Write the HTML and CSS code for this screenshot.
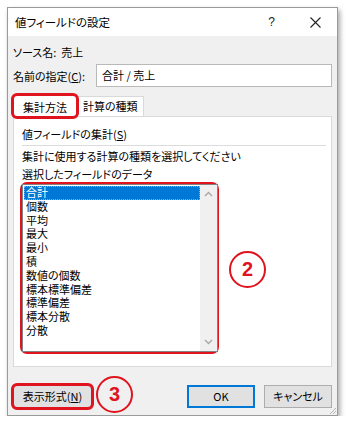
FILE: index.html
```html
<!DOCTYPE html>
<html>

<head>
  <title>値フィールドの設定</title>
  <meta charset="utf-8">
  <link rel="stylesheet" href="styles.css">
</head>

<body>

  <div class="dialog">
    <div class="titlebar">
      <span class="title">値フィールドの設定</span>
      <span class="help">?</span>
      <svg class="close" width="11" height="11" viewBox="0 0 11 11">
        <path d="M0.5 0.5 L10.5 10.5 M10.5 0.5 L0.5 10.5" stroke="#222" stroke-width="1.1" fill="none" />
      </svg>
    </div>

    <div class="content">
      <div class="source-row">ソース名:&nbsp;&nbsp;売上</div>

      <div class="name-row">
        <label>名前の指定(<u>C</u>):</label>
        <div class="input">合計 / 売上</div>
      </div>

      <div class="tabs">
        <div class="tab tab-active mark">集計方法</div>
        <div class="tab">計算の種類</div>
      </div>

      <div class="panel">
        <div class="group-title">値フィールドの集計(<u>S</u>)</div>
        <div class="separator"></div>
        <div class="text-line">集計に使用する計算の種類を選択してください</div>
        <div class="text-line">選択したフィールドのデータ</div>

        <div class="list-mark">
          <div class="listbox">
            <ul class="items">
              <li class="selected">合計</li>
              <li>個数</li>
              <li>平均</li>
              <li>最大</li>
              <li>最小</li>
              <li>積</li>
              <li>数値の個数</li>
              <li>標本標準偏差</li>
              <li>標準偏差</li>
              <li>標本分散</li>
              <li>分散</li>
            </ul>
            <div class="scrollbar">
              <svg width="9" height="6" viewBox="0 0 9 6">
                <path d="M1 5 L4.5 1.5 L8 5" stroke="#a6a6a6" stroke-width="1.3" fill="none" />
              </svg>
              <svg width="9" height="6" viewBox="0 0 9 6">
                <path d="M1 1 L4.5 4.5 L8 1" stroke="#a6a6a6" stroke-width="1.3" fill="none" />
              </svg>
            </div>
          </div>
        </div>
      </div>

      <div class="buttons">
        <div class="button mark">表示形式(<u>N</u>)</div>
        <div class="spacer"></div>
        <div class="button button-default">OK</div>
        <div class="button">キャンセル</div>
      </div>
    </div>

    <div class="badge badge-2">2</div>
    <div class="badge badge-3">3</div>

    <svg class="grip" width="10" height="10" viewBox="0 0 10 10">
      <path d="M9 3 L3 9 M9 6 L6 9" stroke="#b5b5b5" stroke-width="1" fill="none" />
    </svg>
  </div>

</body>

</html>
```

FILE: styles.css
```css
html {
  background-color: #ffffff;
}

body {
  margin: 0;
  padding: 7px 0 0 7px;
  font-family: "Noto Sans CJK JP", "Noto Sans", sans-serif;
  font-feature-settings: "palt";
  font-size: 11px;
  color: #000000;
}

.dialog {
  position: relative;
  width: 329px;
  height: 407px;
  border: 1px solid #9a9a9a;
  box-shadow: 2px 3px 5px rgba(0, 0, 0, 0.35);
  background-color: #f0f0f0;
  display: flex;
  flex-direction: column;
}

.titlebar {
  height: 28px;
  background-color: #ffffff;
  display: flex;
  align-items: center;
  padding-left: 7px;
}

.title {
  font-size: 11.5px;
  flex: 1;
}

.help {
  font-size: 12px;
  font-family: "Liberation Sans", sans-serif;
  color: #222;
  margin-right: 35px;
}

.close {
  margin-right: 16px;
}

.content {
  padding: 0 5px;
  display: flex;
  flex-direction: column;
}

.source-row {
  padding-top: 8px;
  line-height: 16px;
  height: 16px;
}

.name-row {
  margin-top: 4px;
  display: flex;
  align-items: center;
  height: 23px;
}

.name-row label {
  width: 83px;
}

.input {
  flex: 1;
  height: 21px;
  line-height: 21px;
  padding-left: 5px;
  background-color: #ffffff;
  border: 1px solid #b9b9b9;
}

.tabs {
  margin-top: 7px;
  height: 22px;
  display: flex;
  align-items: flex-end;
}

.tab {
  height: 19px;
  line-height: 19px;
  padding: 0 5px;
  border: 1px solid #d9d9d9;
  border-bottom: none;
  background-color: #ffffff;
}

.tab-active {
  height: 21px;
  width: 52px;
  text-align: center;
  position: relative;
  z-index: 1;
  margin-bottom: -1px;
  line-height: 22px;
}

.mark {
  outline: 3px solid #e0141e;
  outline-offset: -1px;
  border-radius: 4px;
}

.panel {
  height: 249px;
  border: 1px solid #d9d9d9;
  background-color: #ffffff;
  padding: 0 5px 0 8px;
  display: flex;
  flex-direction: column;
}

.group-title {
  margin-top: 9px;
  line-height: 16px;
}

.separator {
  margin-top: 3px;
  height: 1px;
  background-color: #dcdcdc;
}

.text-line {
  line-height: 16px;
  margin-top: 2px;
}

.text-line + .text-line {
  margin-top: 2px;
}

.list-mark {
  margin-left: -2px;
  width: 193px;
  height: 166px;
  border: 3px solid #e0141e;
  border-radius: 7px;
}

.listbox {
  margin: -1px 0 0 -1px;
  width: 194px;
  height: 166px;
  border: 1px solid #828282;
  background-color: #ffffff;
  display: flex;
}

.items {
  list-style: none;
  margin: 0;
  padding: 1px 0 0 1px;
  flex: 1;
}

.items li {
  line-height: 13.8px;
  height: 13.8px;
  padding-left: 2px;
}

.items .selected {
  background-color: #0078d7;
  color: #ffffff;
  outline: 1px dotted #6fb4ff;
  outline-offset: -1px;
}

.scrollbar {
  width: 17px;
  background-color: #f0f0f0;
  display: flex;
  flex-direction: column;
  justify-content: space-between;
  align-items: center;
  padding: 6px 0;
}

.buttons {
  margin-top: 18px;
  display: flex;
  gap: 9px;
  height: 23px;
}

.spacer {
  flex: 1;
}

.button {
  width: 66px;
  height: 21px;
  line-height: 21px;
  text-align: center;
  background-color: #e1e1e1;
  border: 1px solid #adadad;
}

.buttons .mark {
  width: 77px;
}

.button-default {
  border: 1px solid #0078d7;
  box-shadow: inset 0 0 0 1px #0078d7;
}

.badge {
  position: absolute;
  width: 33px;
  height: 33px;
  border: 2.5px solid #e0141e;
  border-radius: 50%;
  color: #e0141e;
  font-family: "Liberation Sans", sans-serif;
  font-weight: bold;
  font-size: 20px;
  line-height: 33px;
  text-align: center;
}

.badge-2 {
  left: 221px;
  top: 243px;
}

.badge-3 {
  left: 88px;
  top: 368px;
}

.grip {
  position: absolute;
  right: 0;
  bottom: 0;
}
```
